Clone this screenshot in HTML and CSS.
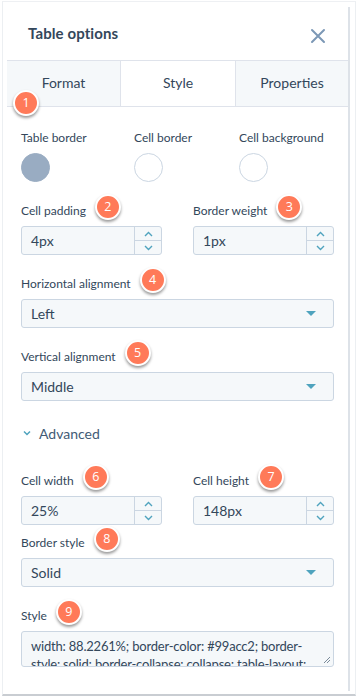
FILE: index.html
```html
<!DOCTYPE html>
<html lang="en">
<head>
<meta charset="utf-8">
<title>Table options</title>
<link rel="stylesheet" href="styles.css">
</head>
<body>
<div class="frame">
  <div class="panel">
    <header class="head">
      <h1 class="title">Table options</h1>
      <button class="close" aria-label="Close">
        <svg width="16" height="16" viewBox="0 0 16 16"><path d="M2 2 L14 14 M14 2 L2 14" stroke="#7c98b6" stroke-width="2" stroke-linecap="round" fill="none"/></svg>
      </button>
    </header>
    <nav class="tabs">
      <div class="tab">Format</div>
      <div class="tab tab-active">Style</div>
      <div class="tab">Properties</div>
      <span class="badge badge-tab">1</span>
    </nav>
    <div class="content">
      <div class="swatches">
        <div class="swatch">
          <span class="label">Table border</span>
          <span class="circle circle-filled"></span>
        </div>
        <div class="swatch">
          <span class="label">Cell border</span>
          <span class="circle"></span>
        </div>
        <div class="swatch">
          <span class="label">Cell background</span>
          <span class="circle"></span>
        </div>
      </div>

      <div class="pair gap-std">
        <div class="field">
          <span class="label"><span class="lt">Cell padding<span class="badge">2</span></span></span>
          <div class="num">
            <span class="num-val">4px</span>
            <span class="spin">
              <span class="spin-btn"><svg width="9" height="6" viewBox="0 0 9 6"><path d="M1 5 L4.5 1.5 L8 5" stroke="#4fa3be" stroke-width="1.4" fill="none"/></svg></span>
              <span class="spin-btn"><svg width="9" height="6" viewBox="0 0 9 6"><path d="M1 1 L4.5 4.5 L8 1" stroke="#4fa3be" stroke-width="1.4" fill="none"/></svg></span>
            </span>
          </div>
        </div>
        <div class="field">
          <span class="label"><span class="lt">Border weight<span class="badge">3</span></span></span>
          <div class="num">
            <span class="num-val">1px</span>
            <span class="spin">
              <span class="spin-btn"><svg width="9" height="6" viewBox="0 0 9 6"><path d="M1 5 L4.5 1.5 L8 5" stroke="#4fa3be" stroke-width="1.4" fill="none"/></svg></span>
              <span class="spin-btn"><svg width="9" height="6" viewBox="0 0 9 6"><path d="M1 1 L4.5 4.5 L8 1" stroke="#4fa3be" stroke-width="1.4" fill="none"/></svg></span>
            </span>
          </div>
        </div>
      </div>

      <div class="field gap-std">
        <span class="label"><span class="lt">Horizontal alignment<span class="badge">4</span></span></span>
        <div class="select"><span>Left</span><span class="caret"></span></div>
      </div>

      <div class="field gap-std">
        <span class="label"><span class="lt">Vertical alignment<span class="badge">5</span></span></span>
        <div class="select"><span>Middle</span><span class="caret"></span></div>
      </div>

      <div class="advanced">
        <svg width="8" height="6" viewBox="0 0 8 6"><path d="M1 1.5 L4 4.5 L7 1.5" stroke="#4fa3be" stroke-width="1.5" fill="none"/></svg>
        <span>Advanced</span>
      </div>

      <div class="pair gap-adv">
        <div class="field">
          <span class="label"><span class="lt">Cell width<span class="badge">6</span></span></span>
          <div class="num">
            <span class="num-val">25%</span>
            <span class="spin">
              <span class="spin-btn"><svg width="9" height="6" viewBox="0 0 9 6"><path d="M1 5 L4.5 1.5 L8 5" stroke="#4fa3be" stroke-width="1.4" fill="none"/></svg></span>
              <span class="spin-btn"><svg width="9" height="6" viewBox="0 0 9 6"><path d="M1 1 L4.5 4.5 L8 1" stroke="#4fa3be" stroke-width="1.4" fill="none"/></svg></span>
            </span>
          </div>
        </div>
        <div class="field">
          <span class="label"><span class="lt">Cell height<span class="badge">7</span></span></span>
          <div class="num">
            <span class="num-val">148px</span>
            <span class="spin">
              <span class="spin-btn"><svg width="9" height="6" viewBox="0 0 9 6"><path d="M1 5 L4.5 1.5 L8 5" stroke="#4fa3be" stroke-width="1.4" fill="none"/></svg></span>
              <span class="spin-btn"><svg width="9" height="6" viewBox="0 0 9 6"><path d="M1 1 L4.5 4.5 L8 1" stroke="#4fa3be" stroke-width="1.4" fill="none"/></svg></span>
            </span>
          </div>
        </div>
      </div>

      <div class="field gap-small">
        <span class="label"><span class="lt">Border style<span class="badge">8</span></span></span>
        <div class="select"><span>Solid</span><span class="caret"></span></div>
      </div>

      <div class="field gap-std">
        <span class="label"><span class="lt">Style<span class="badge">9</span></span></span>
        <div class="textarea">
          <p class="ta-text">width: 88.2261%; border-color: #99acc2; border-style: solid; border-collapse: collapse; table-layout: fixed; height: 148px;</p>
          <svg class="grip" width="8" height="8" viewBox="0 0 8 8"><path d="M7 1 L1 7 M7 4 L4 7" stroke="#7a8a99" stroke-width="1" fill="none"/></svg>
        </div>
      </div>
    </div>
  </div>
  <div class="track"></div>
</div>
</body>
</html>
```

FILE: styles.css
```css
* { box-sizing: border-box; }

html, body {
  margin: 0;
  padding: 0;
  background: #ffffff;
}

body {
  font-family: "Lato", "Open Sans", sans-serif;
  color: #33475b;
}

.frame {
  display: flex;
  width: 354px;
  height: 695px;
  margin: 1px 0 0 2px;
  padding-left: 4px;
  border-top: 1px solid #eef0f3;
  border-left: 1px solid #eceff2;
  border-right: 1px solid #eceff2;
  border-bottom: 2px solid #c9cdd2;
  overflow: hidden;
}

.panel {
  width: 341px;
  flex: none;
  display: flex;
  flex-direction: column;
}

.track {
  width: 2px;
  flex: none;
  margin: 5px 0 3px;
  background: #dde2e8;
}

/* header */
.head {
  height: 58px;
  padding: 3px 21px 0 21px;
  display: flex;
  align-items: center;
  justify-content: space-between;
}

.title {
  margin: 0;
  font-size: 15px;
  font-weight: 700;
  letter-spacing: 0.1px;
  color: #33475b;
}

.close {
  border: 0;
  background: none;
  padding: 0;
  margin-top: 6px;
  margin-right: 1px;
  width: 16px;
  height: 16px;
  display: flex;
}

/* tabs */
.tabs {
  position: relative;
  display: grid;
  grid-template-columns: 113px 115px 1fr;
  height: 47px;
  border-top: 1px solid #dfe3eb;
  border-bottom: 1px solid #dfe3eb;
  background: #f5f8fa;
}

.tab {
  display: flex;
  align-items: center;
  justify-content: center;
  font-size: 14px;
  color: #33475b;
  padding-bottom: 2px;
}

.tab + .tab {
  border-left: 1px solid #dfe3eb;
}

.tab-active {
  background: #ffffff;
}

/* badges */
.badge {
  position: absolute;
  width: 26px;
  height: 26px;
  border-radius: 50%;
  background: #ff7a59;
  border: 2px solid #ffffff;
  box-shadow: 0 2px 3px rgba(0, 0, 0, 0.4);
  color: #ffffff;
  font-family: "Open Sans", "Lato", sans-serif;
  font-size: 12.5px;
  line-height: 22px;
  text-align: center;
  left: calc(100% + 9px);
  top: -9px;
}

.badge-tab {
  left: 6px;
  top: 29px;
}

/* content */
.content {
  padding: 23px 14px 0 14px;
}

.label {
  display: block;
  font-size: 12px;
  line-height: 16px;
  color: #33475b;
}

.lt {
  position: relative;
}

.swatches {
  display: grid;
  grid-template-columns: 113px 105px 1fr;
}

.swatch {
  display: flex;
  flex-direction: column;
  align-items: flex-start;
}

.circle {
  display: block;
  margin-top: 7px;
  width: 29px;
  height: 29px;
  border-radius: 50%;
  border: 1px solid #cbd6e2;
  background: #ffffff;
}

.circle-filled {
  background: #99acc2;
  border-color: #99acc2;
}

.pair {
  display: grid;
  grid-template-columns: 1fr 1fr;
  column-gap: 31px;
}

.gap-std { margin-top: 21px; }
.gap-adv { margin-top: 30px; }
.gap-small { margin-top: 10px; }

.field {
  display: flex;
  flex-direction: column;
}

.num {
  margin-top: 7px;
  height: 29px;
  display: flex;
  border: 1px solid #cbd6e2;
  border-radius: 3px;
  background: #f5f8fa;
}

.num-val {
  flex: 1;
  display: flex;
  align-items: center;
  padding-left: 9px;
  font-size: 14px;
}

.spin {
  width: 27px;
  display: flex;
  flex-direction: column;
  border-left: 1px solid #cbd6e2;
}

.spin-btn {
  flex: 1;
  display: flex;
  align-items: center;
  justify-content: center;
}

.spin-btn + .spin-btn {
  border-top: 1px solid #cbd6e2;
}

.select {
  margin-top: 7px;
  height: 29px;
  display: flex;
  align-items: center;
  justify-content: space-between;
  padding: 0 17px 0 9px;
  border: 1px solid #cbd6e2;
  border-radius: 3px;
  background: #f5f8fa;
  font-size: 14px;
}

.caret {
  width: 0;
  height: 0;
  border-left: 5px solid transparent;
  border-right: 5px solid transparent;
  border-top: 5px solid #4fa3be;
}

.advanced {
  margin-top: 22px;
  height: 20px;
  display: flex;
  align-items: center;
  gap: 8px;
  padding-left: 2px;
  font-size: 14px;
  color: #425b76;
}

.textarea {
  position: relative;
  margin-top: 7px;
  height: 36px;
  overflow: hidden;
  border: 1px solid #cbd6e2;
  border-radius: 3px;
  background: #f5f8fa;
  padding: 5px 6px 0 9px;
}

.ta-text {
  margin: 0;
  font-size: 13px;
  letter-spacing: -0.2px;
  line-height: 18px;
  color: #33475b;
}

.grip {
  position: absolute;
  right: 2px;
  bottom: 2px;
}
```
